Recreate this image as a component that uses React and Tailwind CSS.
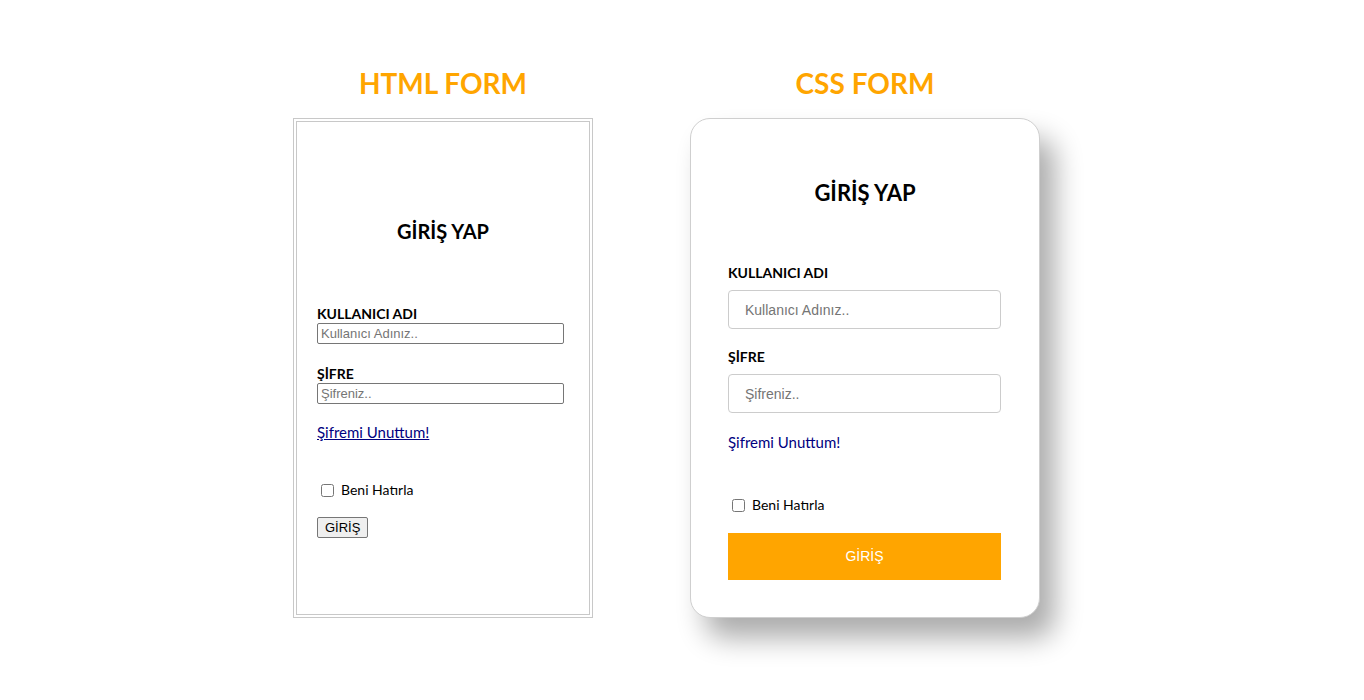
import React from 'react';

const font = { fontFamily: 'Lato, "Open Sans", sans-serif' };
const arial = { fontFamily: 'Arial, "Liberation Sans", sans-serif' };

function HtmlForm() {
  return (
    <div className="flex w-[300px] flex-col items-center">
      <h1 className="text-[28px] font-bold leading-[30px] text-[#FFA500]">HTML FORM</h1>
      <div className="mt-[20px] h-[500px] w-[300px] border border-[#c8c8c8] p-[2px]">
        <div className="h-full border border-[#c8c8c8] px-[20px]">
          <h2 className="mt-[97px] text-center text-[20px] font-bold leading-[24px] text-black">GİRİŞ YAP</h2>
          <div className="mt-[63px] text-[14px] font-bold leading-[16px] text-black">KULLANICI ADI</div>
          <input
            type="text"
            placeholder="Kullanıcı Adınız.."
            className="mt-[1px] block h-[21px] w-[247px] rounded-[2px] border border-[#767676] px-[3px] text-[13px] placeholder:text-[#757575]"
            style={arial}
          />
          <div className="mt-[22px] text-[14px] font-bold leading-[16px] text-black">ŞİFRE</div>
          <input
            type="password"
            placeholder="Şifreniz.."
            className="mt-[1px] block h-[21px] w-[247px] rounded-[2px] border border-[#767676] px-[3px] text-[13px] placeholder:text-[#757575]"
            style={arial}
          />
          <a href="#" className="mt-[19px] block text-[15px] leading-[18px] text-[#000080] underline">Şifremi Unuttum!</a>
          <label className="mt-[40px] flex items-center gap-[7px] pl-[4px] text-[14px] leading-[18px] text-black">
            <input type="checkbox" className="h-[13px] w-[13px]" />
            Beni Hatırla
          </label>
          <button
            className="mt-[18px] block h-[21px] rounded-[2px] border border-[#767676] bg-[#efefef] px-[7px] text-[13px] leading-none text-black"
            style={arial}
          >
            GİRİŞ
          </button>
        </div>
      </div>
    </div>
  );
}

function CssForm() {
  return (
    <div className="flex w-[350px] flex-col items-center">
      <h1 className="text-[28px] font-bold leading-[30px] text-[#FFA500]">CSS FORM</h1>
      <div className="mt-[20px] h-[500px] w-[350px] rounded-[20px] border border-[#cfcfcf] bg-white px-[37px] shadow-[15px_20px_28px_rgba(0,0,0,0.33)]">
        <h2 className="mt-[62px] text-center text-[22px] font-bold leading-[24px] text-black">GİRİŞ YAP</h2>
        <div className="mt-[60px] text-[14px] font-bold leading-[16px] text-black">KULLANICI ADI</div>
        <input
          type="text"
          placeholder="Kullanıcı Adınız.."
          className="mt-[9px] block h-[39px] w-[273px] rounded-[4px] border border-[#cccccc] px-[16px] text-[14px] placeholder:text-[#757575]"
          style={arial}
        />
        <div className="mt-[20px] text-[14px] font-bold leading-[16px] text-black">ŞİFRE</div>
        <input
          type="password"
          placeholder="Şifreniz.."
          className="mt-[9px] block h-[39px] w-[273px] rounded-[4px] border border-[#cccccc] px-[16px] text-[14px] placeholder:text-[#757575]"
          style={arial}
        />
        <a href="#" className="mt-[20px] block text-[15px] leading-[18px] text-[#000080]">Şifremi Unuttum!</a>
        <label className="mt-[45px] flex items-center gap-[7px] pl-[4px] text-[14px] leading-[18px] text-black">
          <input type="checkbox" className="h-[13px] w-[13px]" />
          Beni Hatırla
        </label>
        <button className="mt-[19px] block h-[47px] w-[273px] bg-[#FFA500] text-[14px] text-white" style={arial}>
          GİRİŞ
        </button>
      </div>
    </div>
  );
}

export default function App() {
  return (
    <div className="min-h-[700px] w-full bg-white" style={font}>
      <div className="flex items-start gap-[97px] pl-[293px] pt-[68px]">
        <HtmlForm />
        <CssForm />
      </div>
    </div>
  );
}
